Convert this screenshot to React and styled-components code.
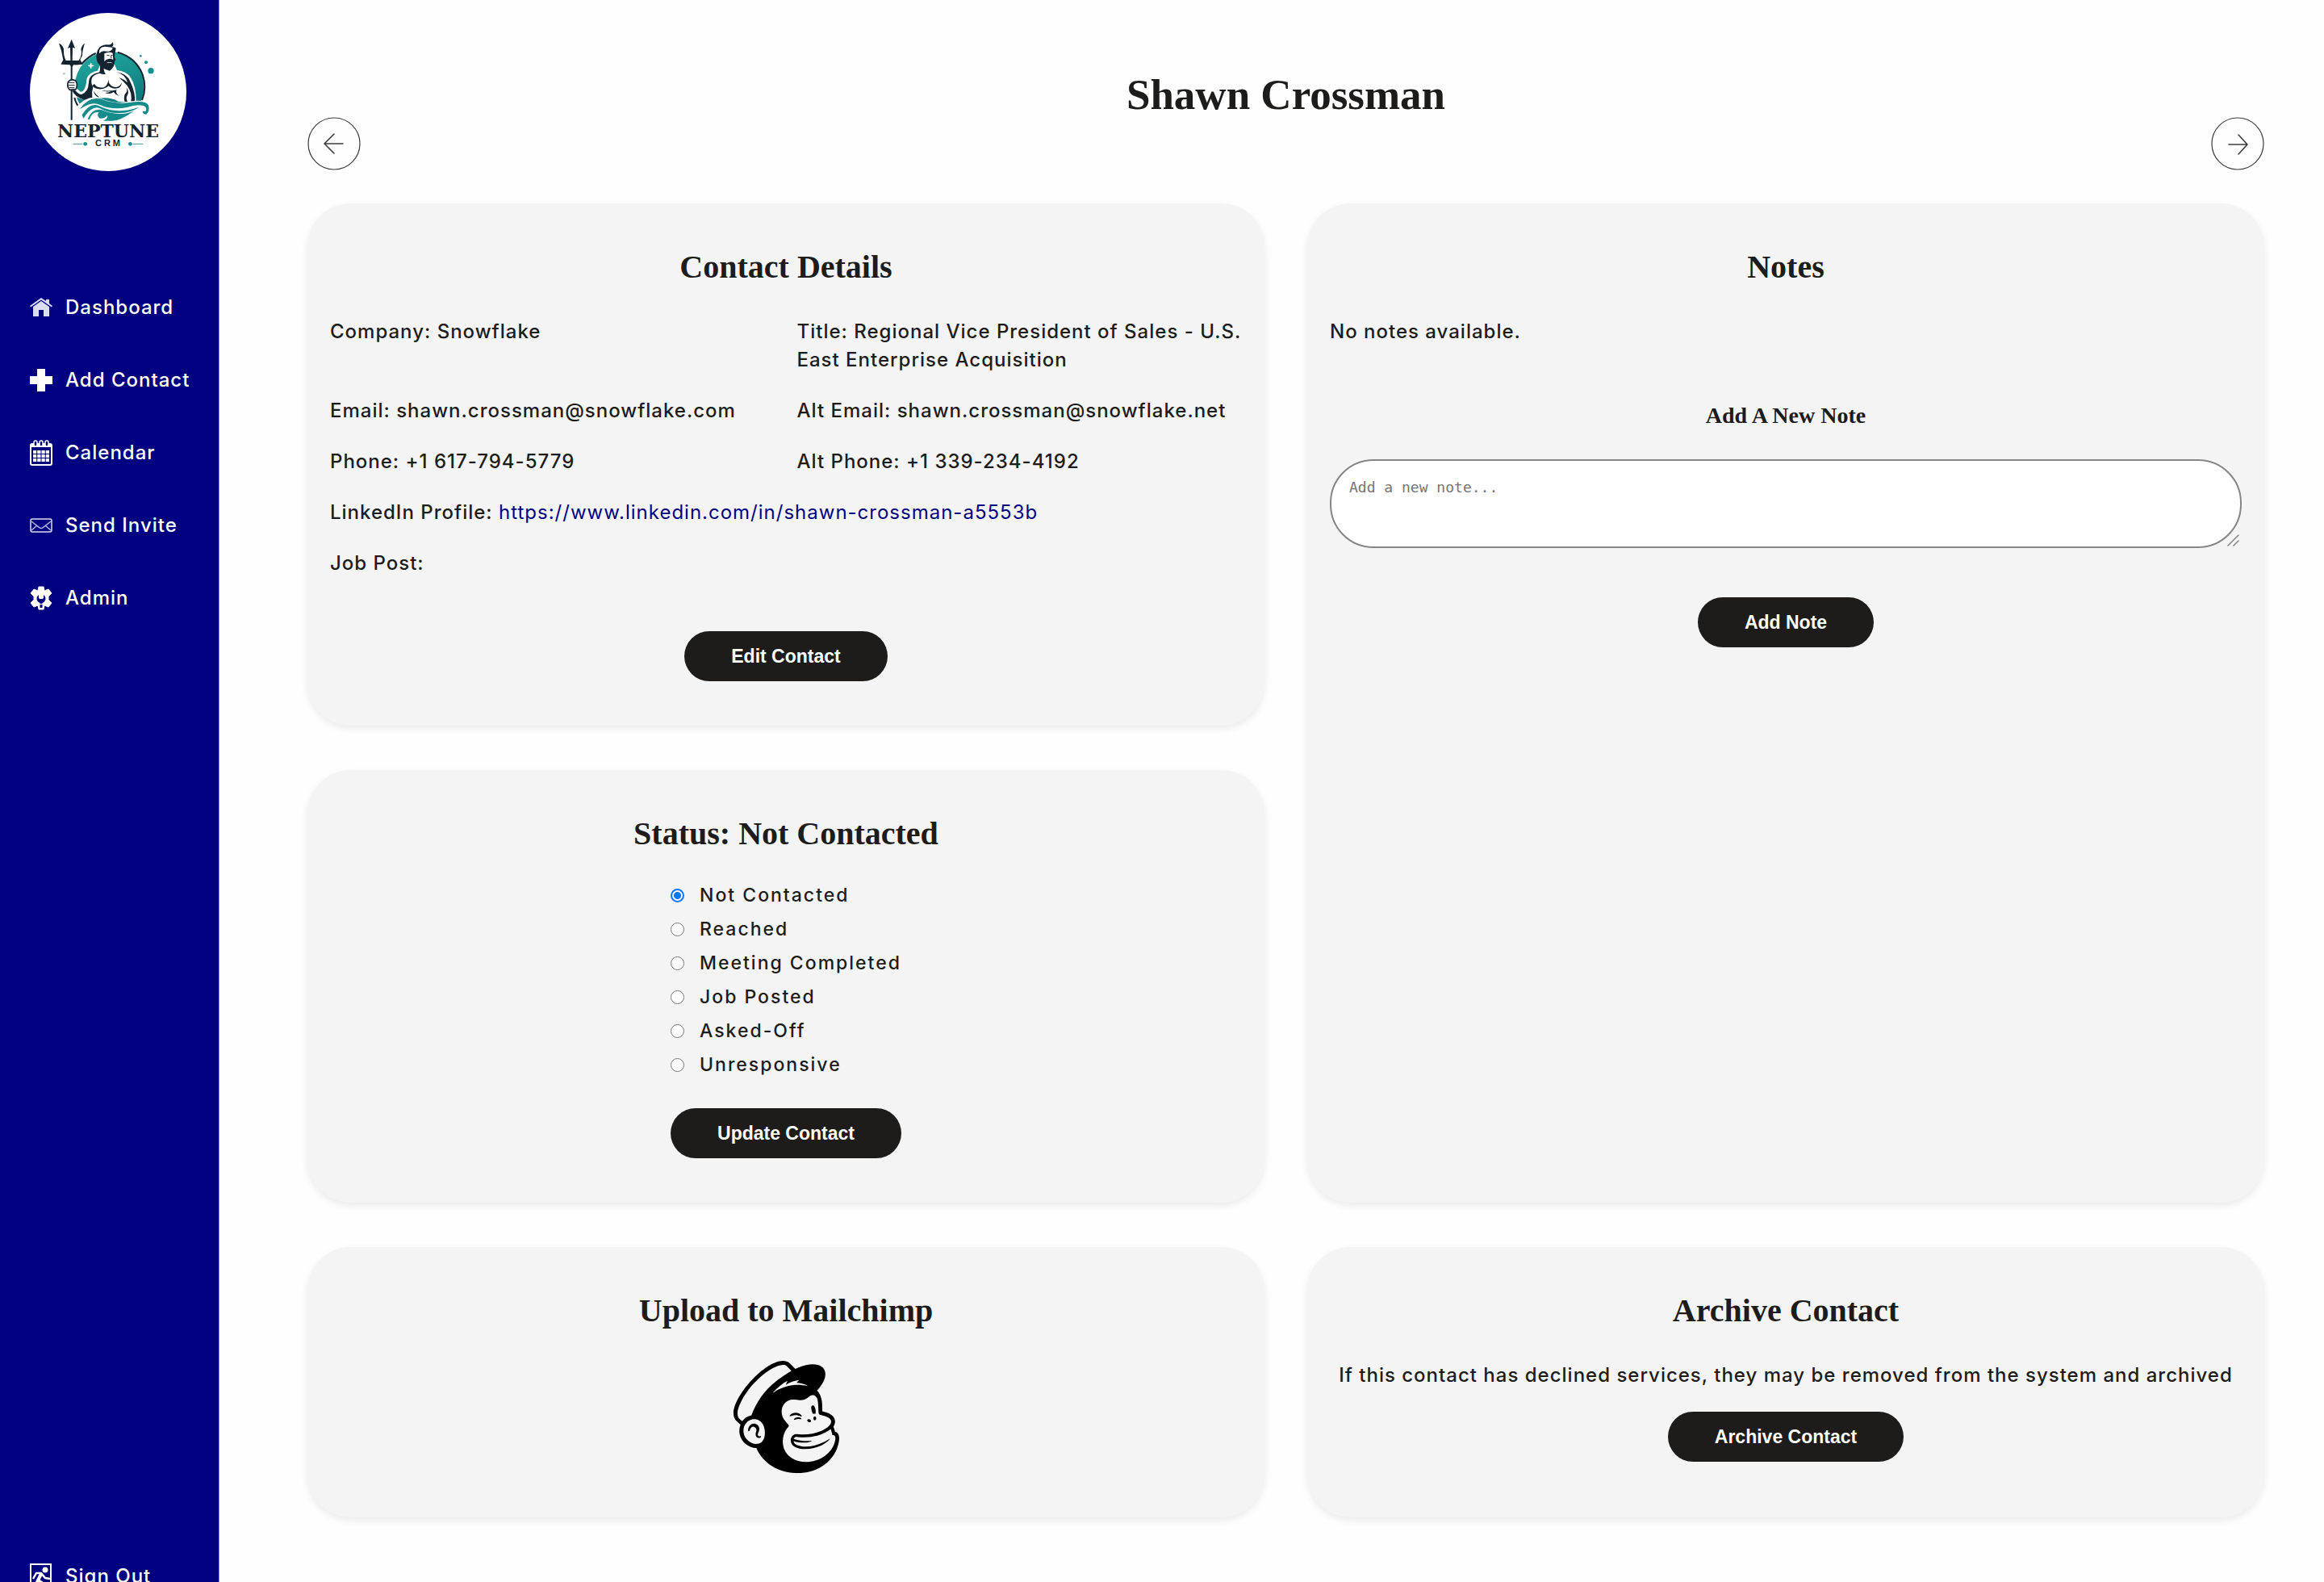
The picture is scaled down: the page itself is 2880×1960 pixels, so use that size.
import React, { useState } from "react";
import styled, { createGlobalStyle } from "styled-components";
import { SiMailchimp } from "react-icons/si";

const ink = "#1d1c1a";
const navy = "#000080";
const bodyFont = `Inter, "Noto Sans", sans-serif`;
const titleFont = `"Liberation Serif", serif`;

const GlobalStyle = createGlobalStyle`
  *, *::before, *::after { box-sizing: border-box; }
  body {
    margin: 0;
    background: #fefefe;
    color: ${ink};
    font-family: ${bodyFont};
    font-size: 24px;
    font-weight: 500;
    line-height: 35px;
    letter-spacing: 1px;
  }
  h1, h2, h3, p, ul, dl, dd, fieldset { margin: 0; padding: 0; }
`;

const Page = styled.div`
  display: flex;
  align-items: flex-start;
  min-height: 100vh;
`;

const Sidebar = styled.aside`
  flex: none;
  position: sticky;
  top: 0;
  width: 272px;
  height: 100vh;
  overflow: hidden;
  background: ${navy};
  border-right: 1px solid #8f8fc8;
`;

const SidebarBody = styled.div`
  display: flex;
  flex-direction: column;
  height: calc(100vh + 10px);
  padding: 16px 0 0 37px;
`;

const LogoDisc = styled.a`
  display: block;
  width: 194px;
  height: 196px;
  border-radius: 50%;
  background: #fff;
  overflow: hidden;
  svg { display: block; width: 100%; height: 100%; }
`;

const Nav = styled.nav`
  flex: 1;
  display: flex;
  flex-direction: column;
  gap: 55px;
  margin-top: 151px;
`;

const NavLink = styled.a`
  display: flex;
  align-items: center;
  gap: 16px;
  color: #fff;
  text-decoration: none;
  margin-top: ${(p) => (p.$last ? "auto" : "0")};
  svg { flex: none; width: 28px; height: 32px; overflow: visible; }
`;

const Main = styled.main`
  flex: 1;
  min-width: 0;
  padding: 89px 74px 80px 109px;
`;

const Title = styled.h1`
  font: bold 53px/56px ${titleFont};
  letter-spacing: 0;
  text-align: center;
`;

const Pager = styled.div`
  display: flex;
  justify-content: space-between;
  margin-bottom: 41px;
`;

const PagerButton = styled.button`
  width: 66px;
  height: 66px;
  padding: 0;
  border: 0;
  border-radius: 50%;
  background: none;
  svg { display: block; }
`;

const Cards = styled.div`
  display: grid;
  grid-template-columns: minmax(0, 1fr) minmax(0, 1fr);
  gap: 55px 53px;
`;

const Card = styled.section`
  display: flex;
  flex-direction: column;
  align-items: center;
  grid-row: ${(p) => (p.$tall ? "span 2" : "auto")};
  padding: 52px 28px 55px;
  border-radius: 54px;
  background: #f4f4f4;
  box-shadow: 0 4px 10px rgba(0, 0, 0, 0.08);
`;

const CardTitle = styled.h2`
  margin-bottom: 35px;
  font: bold 40px/54px ${titleFont};
  letter-spacing: 0;
`;

const SubTitle = styled.h3`
  margin: 68px 0 35px;
  font: bold 28px/38px ${titleFont};
  letter-spacing: 0;
`;

const Details = styled.div`
  width: 100%;
  display: grid;
  grid-template-columns: minmax(0, 1fr) minmax(0, 1fr);
  gap: 28px 27px;
  margin-bottom: 67px;
`;

const Detail = styled.p`
  grid-column: ${(p) => (p.$wide ? "1 / -1" : "auto")};
`;

const ProfileLink = styled.a`
  color: ${navy};
  font-weight: 400;
  text-decoration: none;
`;

const PillButton = styled.button`
  height: 62px;
  padding: 0 58px;
  border: 0;
  border-radius: 31px;
  background: ${ink};
  color: #fff;
  font: bold 23px/28px "Liberation Sans", sans-serif;
  letter-spacing: 0;
  white-space: nowrap;
`;

const Message = styled.p`
  width: 100%;
  text-align: ${(p) => (p.$centered ? "center" : "left")};
  margin-bottom: ${(p) => (p.$centered ? "28px" : "0")};
`;

const NoteForm = styled.form`
  width: 100%;
  display: flex;
  flex-direction: column;
  align-items: center;
`;

const NoteField = styled.div`
  position: relative;
  width: 100%;
  margin-bottom: 61px;
`;

const NoteInput = styled.textarea`
  display: block;
  width: 100%;
  height: 110px;
  padding: 22px;
  border: 2px solid #858585;
  border-radius: 54px;
  background: #fff;
  color: ${ink};
  font: 18px/22px "DejaVu Sans Mono", monospace;
  letter-spacing: 0;
  resize: none;
  &::placeholder { color: #757575; }
`;

const Grip = styled.svg`
  position: absolute;
  right: 3px;
  bottom: 2px;
  width: 15px;
  height: 15px;
`;

const StatusForm = styled.form`
  display: flex;
  flex-direction: column;
  align-items: flex-start;
  gap: 40px;
`;

const Options = styled.fieldset`
  display: flex;
  flex-direction: column;
  gap: 14px;
  border: 0;
  font-size: 23px;
  line-height: 28px;
  letter-spacing: 2px;
`;

const Option = styled.label`
  display: flex;
  align-items: center;
  gap: 19px;
`;

const Radio = styled.input`
  appearance: none;
  width: 17px;
  height: 17px;
  margin: 0;
  border: 1px solid #767676;
  border-radius: 50%;
  background: #fff;
  &:checked {
    border: 2px solid #0a75ff;
    background: radial-gradient(circle, #0a75ff 4px, #fff 5px);
  }
`;

const UploadButton = styled.button`
  width: 139px;
  height: 139px;
  padding: 0;
  border: 0;
  background: none;
  color: #000;
  svg { display: block; width: 100%; height: 100%; }
`;

function Logo() {
  return (
    <svg viewBox="111 47 580 588" role="img" aria-label="Neptune CRM">
      <defs>
        <linearGradient id="sea" x1="0" y1="0" x2="0.3" y2="1">
          <stop offset="0" stopColor="#22aca2" />
          <stop offset="1" stopColor="#0b7478" />
        </linearGradient>
      </defs>
      <circle cx="406" cy="320" r="129" fill="url(#sea)" />
      <path d="M302 237Q330 207 355 197M436 193Q505 213 529 276Q546 325 527 371M276 362Q281 386 299 405" fill="none" stroke="#132430" strokeWidth="6" />
      <path d="M337 233l3 8 8 2-8 3-3 8-3-8-8-3 8-2z" fill="#fff" stroke="#fff" strokeWidth="2" />
      {/* torso */}
      <path d="M361 262Q320 270 320 305Q314 341 299 340L282 326L258 333Q280 371 322 369Q336 366 333 372Q400 352 440 377L505 381Q507 318 481 282Q466 264 434 260L424 236L374 236Z" fill="#fff" />
      <path d="M366 268Q329 275 329 306Q327 343 302 350Q290 349 278 334L267 336Q280 362 313 370Q335 370 342 361Q339 340 345 323Q334 305 342 286Q354 273 373 271Z" fill="#132430" />
      <path d="M370 235Q374 263 366 269Q379 278 392 274Q382 262 386 248ZM341 318Q356 334 382 329Q398 324 402 318Q418 333 440 326Q451 320 452 306Q447 320 431 323Q415 323 407 311Q402 307 403 292Q399 317 385 324Q360 328 350 311ZM431 266Q474 273 484 304Q503 344 500 377L486 377Q492 345 471 316Q450 293 440 286Q462 294 473 306Q466 276 431 266ZM347 337Q351 359 369 361Q354 350 347 337ZM376 334Q403 340 433 333Q425 346 444 357Q430 353 421 341Q409 351 388 344Q402 345 411 338Q391 342 376 334ZM469 322Q475 338 463 349Q458 365 463 377L473 377Q466 365 472 354Q481 343 469 322Z" fill="#132430" />
      {/* head */}
      <path d="M361 230Q353 208 362 186Q369 166 397 165Q412 168 418 155Q424 168 414 174Q428 173 430 180Q426 194 425 211L429 221L425 228Q425 249 407 262Q378 257 361 230Z" fill="#132430" />
      <path d="M368 198Q365 174 389 172L402 174Q423 175 416 182Q408 194 385 189Q376 189 368 198ZM387 198Q403 190 418 196L420 221Q410 216 402 218Q394 219 387 227ZM394 234Q405 226 418 234Q405 231 394 234Z" fill="#fff" />
      <path d="M396 204l10 2M411 205l7-1M412 207l1 9" stroke="#132430" strokeWidth="3" />
      {/* trident */}
      <path d="M262 176h6V445h-6ZM265 145L278 178L269 176L268 224H291Q306 204 300 181Q305 164 314 160Q305 187 305 205L297 221L307 238Q283 241 272 240L267 251L258 240L225 238L234 222Q229 187 218 160Q231 165 236 181Q234 203 244 224H261L260 176L251 178Z" fill="#132430" />
      <path d="M253 302Q264 291 280 299Q290 313 281 331L258 333Q246 320 253 302Z" fill="#fff" stroke="#132430" strokeWidth="5" />
      <path d="M253 306h23M253 316h24M257 325h19" stroke="#132430" strokeWidth="3" />
      {/* waves */}
      <path d="M276 405Q317 352 365 362Q425 386 469 378Q535 366 549 386Q560 409 541 424Q530 425 528 414Q471 469 410 449H305Q293 430 276 405Z" fill="#fff" />
      <path d="M296 405Q326 358 371 366Q428 388 482 380Q540 370 551 390Q557 413 543 424Q529 423 529 412L540 413Q548 399 533 392Q506 386 472 398Q416 409 371 389Q341 373 296 405ZM304 426Q336 373 374 396Q435 425 516 397Q484 420 437 419Q400 419 369 401Q341 390 309 439ZM325 442Q341 400 376 407Q405 420 444 422Q464 424 496 412Q447 448 416 448H383Q404 438 397 428Q388 441 371 439Q355 430 367 416Q340 413 332 443Z" fill="#158b8b" />
      <circle cx="560" cy="262" r="11" fill="#168f90" />
      <circle cx="542" cy="231" r="6" fill="#168f90" />
      <circle cx="522" cy="207" r="4" fill="#168f90" />
      <circle cx="237" cy="273" r="4" fill="#9cc9ca" />
      <text x="401" y="509" textAnchor="middle" fontFamily="DejaVu Serif, serif" fontWeight="bold" fontSize="66" letterSpacing="0" fill="#132430">NEPTUNE</text>
      <text x="404" y="543" textAnchor="middle" fontFamily="Liberation Sans, sans-serif" fontWeight="bold" fontSize="33" letterSpacing="9" fill="#132430">CRM</text>
      <path d="M271 534h35M492 534h39" stroke="#4f8f95" strokeWidth="3" />
      <circle cx="316" cy="534" r="7" fill="#158b8b" />
      <circle cx="483" cy="534" r="7" fill="#158b8b" />
    </svg>
  );
}

const HomeIcon = () => (
  <svg viewBox="0 0 28 32" fill="#dcdcf4" aria-hidden="true">
    <path d="M0 14L14 4L20 8V6H24V11L28 14L27 15.500L14 6.500L1 15.500Z" />
    <path d="M14 8L24 15V27H17V19H11V27H4V15Z" />
  </svg>
);

const PlusIcon = () => (
  <svg viewBox="0 0 28 32" fill="#fff" aria-hidden="true">
    <path d="M9 2H19V11H28V21H19V30H9V21H0V11H9Z" />
  </svg>
);

const CalendarIcon = () => (
  <svg viewBox="0 0 28 32" aria-hidden="true">
    <rect x="1" y="5" width="26" height="26" rx="2" fill="none" stroke="#fff" strokeWidth="2" />
    <path d="M1 5H27V9H1Z" fill="#fff" />
    <g fill={navy} stroke="#fff" strokeWidth="1.500">
      <rect x="5" y="1" width="4" height="7" rx="2" />
      <rect x="12" y="1" width="4" height="7" rx="2" />
      <rect x="19" y="1" width="4" height="7" rx="2" />
    </g>
    <path d="M4 15H24M4 20H24M4 25H24" fill="none" stroke="#fff" strokeWidth="4" strokeDasharray="4.200 1.060" />
  </svg>
);

const MailIcon = () => (
  <svg viewBox="0 0 28 32" fill="none" stroke="#dcdcf4" strokeWidth="1.500" aria-hidden="true">
    <rect x="1" y="8" width="26" height="16" rx="2" />
    <path d="M2 11L11 18Q14 21 17 18L26 11M2 22L9 16M26 22L19 16" stroke="#b9b9e6" />
  </svg>
);

const GearIcon = () => (
  <svg viewBox="0 0 28 32" aria-hidden="true">
    <path d="M10 7L11 2H17L18 7L23 5L27 10L23 14V18L27 22L23 27L18 25L17 30H11L10 25L5 27L1 22L5 18V14L1 10L5 5Z" fill="#fff" stroke="#fff" strokeLinejoin="round" />
    <path d="M11 12A5.500 5.500 0 1 0 17 12V16Q14 19 11 16ZM12.500 24H15.500V28H12.500Z" fill={navy} />
    <path d="M12.500 17V23H15.500V17Z" fill={navy} />
  </svg>
);

const ExitIcon = () => (
  <svg viewBox="0 0 28 32" fill="none" stroke="#fff" strokeWidth="2" aria-hidden="true">
    <rect x="1" y="1" width="25" height="30" />
    <circle cx="19" cy="8" r="3.500" fill="#fff" stroke="none" />
    <path d="M4 19L8 12H14L19 18L25 19" strokeWidth="2.500" />
    <path d="M14 13L10 21L16 25L15 31M10 21L8 26H3" strokeWidth="4" />
  </svg>
);

function ArrowIcon({ right }) {
  return (
    <svg viewBox="0 0 66 66" width="66" height="66" fill="none" stroke="#3c3c3c" aria-hidden="true">
      <circle cx="33" cy="33" r="32" strokeWidth="1.200" />
      <path
        d={right ? "M22 34H44M34 22L45 34L34 46" : "M44 33H22M33 21L21 33L33 45"}
        strokeWidth="1.600"
        strokeLinecap="round"
        strokeLinejoin="round"
      />
    </svg>
  );
}

const links = [
  ["Dashboard", HomeIcon],
  ["Add Contact", PlusIcon],
  ["Calendar", CalendarIcon],
  ["Send Invite", MailIcon],
  ["Admin", GearIcon],
];

const statuses = ["Not Contacted", "Reached", "Meeting Completed", "Job Posted", "Asked-Off", "Unresponsive"];

export default function App() {
  const [status, setStatus] = useState(statuses[0]);
  const [note, setNote] = useState("");

  return (
    <>
      <GlobalStyle />
      <Page>
        <Sidebar>
          <SidebarBody>
            <LogoDisc href="#home"><Logo /></LogoDisc>
            <Nav>
              {links.map(([name, Icon]) => (
                <NavLink key={name} href="#"><Icon />{name}</NavLink>
              ))}
              <NavLink href="#" $last><ExitIcon />Sign Out</NavLink>
            </Nav>
          </SidebarBody>
        </Sidebar>
        <Main>
          <Title>Shawn Crossman</Title>
          <Pager>
            <PagerButton type="button" aria-label="Previous contact"><ArrowIcon /></PagerButton>
            <PagerButton type="button" aria-label="Next contact"><ArrowIcon right /></PagerButton>
          </Pager>
          <Cards>
            <Card>
              <CardTitle>Contact Details</CardTitle>
              <Details>
                <Detail>Company: Snowflake</Detail>
                <Detail>Title: Regional Vice President of Sales - U.S. East Enterprise Acquisition</Detail>
                <Detail>Email: shawn.crossman@snowflake.com</Detail>
                <Detail>Alt Email: shawn.crossman@snowflake.net</Detail>
                <Detail>Phone: +1 617-794-5779</Detail>
                <Detail>Alt Phone: +1 339-234-4192</Detail>
                <Detail $wide>
                  LinkedIn Profile:{" "}
                  <ProfileLink href="https://www.linkedin.com/in/shawn-crossman-a5553b">
                    https://www.linkedin.com/in/shawn-crossman-a5553b
                  </ProfileLink>
                </Detail>
                <Detail $wide>Job Post:</Detail>
              </Details>
              <PillButton type="button">Edit Contact</PillButton>
            </Card>
            <Card $tall>
              <CardTitle>Notes</CardTitle>
              <Message>No notes available.</Message>
              <NoteForm onSubmit={(e) => e.preventDefault()}>
                <SubTitle as="label" htmlFor="note">Add A New Note</SubTitle>
                <NoteField>
                  <NoteInput id="note" placeholder="Add a new note..." value={note} onChange={(e) => setNote(e.target.value)} />
                  <Grip viewBox="0 0 15 15" stroke="#858585" strokeWidth="1.500" strokeLinecap="round" aria-hidden="true">
                    <path d="M1 14L14 1M8 14L14 8" />
                  </Grip>
                </NoteField>
                <PillButton type="submit">Add Note</PillButton>
              </NoteForm>
            </Card>
            <Card>
              <CardTitle>Status: Not Contacted</CardTitle>
              <StatusForm onSubmit={(e) => e.preventDefault()}>
                <Options aria-label="Status">
                  {statuses.map((name) => (
                    <Option key={name}>
                      <Radio type="radio" name="status" value={name} checked={status === name} onChange={() => setStatus(name)} />
                      {name}
                    </Option>
                  ))}
                </Options>
                <PillButton type="submit">Update Contact</PillButton>
              </StatusForm>
            </Card>
            <Card>
              <CardTitle>Upload to Mailchimp</CardTitle>
              <UploadButton type="button" aria-label="Upload to Mailchimp"><SiMailchimp /></UploadButton>
            </Card>
            <Card>
              <CardTitle>Archive Contact</CardTitle>
              <Message $centered>
                If this contact has declined services, they may be removed from the system and archived
              </Message>
              <PillButton type="button">Archive Contact</PillButton>
            </Card>
          </Cards>
        </Main>
      </Page>
    </>
  );
}
